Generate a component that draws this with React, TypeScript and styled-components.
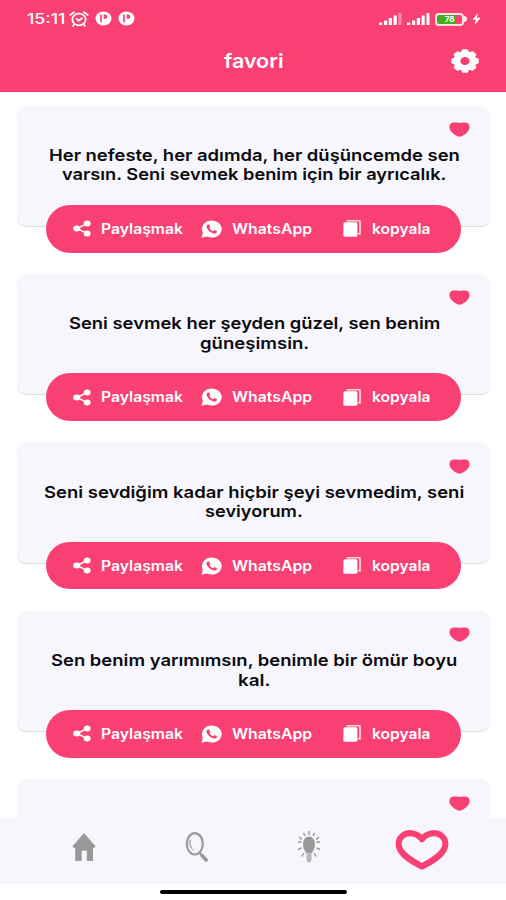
import React, { useLayoutEffect, useRef, useState } from 'react';
import styled, { createGlobalStyle } from 'styled-components';

const PINK = '#f94072';
const PANEL = '#f7f6fc';

const Global = createGlobalStyle`
  * { box-sizing: border-box; }
  body { margin: 0; background: #fff; font-family: Inter, "Liberation Sans", sans-serif; }
  svg { display: block; flex: none; }
`;

const Screen = styled.div`
  width: 506px;
  height: 900px;
  overflow: hidden;
  display: flex;
  flex-direction: column;
  background: #fff;
`;

const Header = styled.header`
  height: 91.5px;
  flex: none;
  background: ${PINK};
  color: #fff;
`;

const StatusBar = styled.div`
  height: 38px;
  padding: 0 25px 0 27px;
  display: flex;
  align-items: center;
  justify-content: space-between;
`;

const StatusGroup = styled.div<{ $gap: number }>`
  display: flex;
  align-items: center;
  gap: ${(p) => p.$gap}px;
`;

const TitleBar = styled.div`
  height: 45px;
  padding: 0 27.5px;
  display: grid;
  grid-template-columns: 1fr auto 1fr;
  align-items: center;
  svg { justify-self: end; }
`;

const List = styled.main`
  flex: none;
  height: 726.5px;
  padding: 14px 16px 0 17px;
  overflow: hidden;
`;

const CardSlot = styled.article`
  height: 168.4px;
`;

const CardBody = styled.div`
  height: 120.5px;
  padding: 16.5px 20px 0 20px;
  border-radius: 9px;
  background: ${PANEL};
  box-shadow: 0 1px 1px rgba(60, 60, 80, 0.18);
`;

const Quote = styled.div`
  padding: 9px 0 0 1px;
  display: flex;
  flex-direction: column;
  align-items: center;
  color: #0b0b0f;
`;

const HeartRow = styled.div`
  display: flex;
  justify-content: flex-end;
`;

const Actions = styled.div`
  height: 47.5px;
  margin: -21px 29px 0;
  padding-left: 26.5px;
  position: relative;
  display: grid;
  grid-template-columns: 128px 142.5px 1fr;
  align-items: center;
  border-radius: 24px;
  background: ${PINK};
  color: #fff;
`;

const Action = styled.div<{ $gap: number }>`
  display: flex;
  align-items: center;
  gap: ${(p) => p.$gap}px;
`;

const NavBar = styled.nav`
  height: 66px;
  flex: none;
  padding: 0 28px 9px;
  display: grid;
  grid-template-columns: repeat(4, 1fr);
  align-items: center;
  justify-items: center;
  background: ${PANEL};
`;

const FavoriteTab = styled.div`
  padding-top: 6px;
`;

const HomeIndicator = styled.div`
  width: 187px;
  height: 4px;
  margin: 6px auto 0;
  flex: none;
  border-radius: 2px;
  background: #000;
`;

const FitBox = styled.span<{ $w: number; $lh: number }>`
  display: block;
  width: ${(p) => p.$w}px;
  height: ${(p) => p.$lh}px;
  line-height: ${(p) => p.$lh}px;
`;

const FitInner = styled.span<{ $size: number; $weight: number }>`
  display: inline-block;
  vertical-align: top;
  white-space: nowrap;
  transform-origin: 0 50%;
  font-size: ${(p) => p.$size}px;
  font-weight: ${(p) => p.$weight};
`;

type FitProps = { width: number; size: number; weight?: number; lh?: number; children: string };

function Wide({ width, size, weight = 600, lh = 19.4, children }: FitProps) {
  const ref = useRef<HTMLSpanElement>(null);
  const [scale, setScale] = useState(1);
  useLayoutEffect(() => {
    if (ref.current) setScale(width / ref.current.offsetWidth);
  }, [width, children]);
  return (
    <FitBox $w={width} $lh={lh}>
      <FitInner ref={ref} $size={size} $weight={weight} style={{ transform: `scaleX(${scale})` }}>
        {children}
      </FitInner>
    </FitBox>
  );
}

const AlarmIcon = () => (
  <svg width="20" height="16" viewBox="0 0 20 16" fill="none" stroke="#fff" strokeWidth="1.7" strokeLinecap="round">
    <ellipse cx="10" cy="8.5" rx="6.7" ry="5.8" />
    <path d="M1.2 4 5 1.2M15 1.2 18.8 4M7.4 7.8 9.8 9.6 13 7.2M5.2 13.5 4 15M14.800 13.500 16 15" />
  </svg>
);

const AppBadgeIcon = () => (
  <svg width="17" height="15" viewBox="0 0 17 15">
    <ellipse cx="8.5" cy="7.5" rx="8" ry="7" fill="#fff" />
    <path d="M6 3.5V11.300" fill="none" stroke={PINK} strokeWidth="1.700" />
    <path d="M8.700 3.400H10.200C13 3.400 13 7.700 10.200 7.700H8.700Z" fill={PINK} />
  </svg>
);

const SignalIcon = ({ full }: { full?: boolean }) => (
  <svg width="23" height="12" viewBox="0 0 23 12" fill="#fff">
    <rect x="0" y="9.5" width="3.200" height="2.5" />
    <rect x="5" y="7.5" width="3.200" height="4.5" />
    <rect x="9.8" y="5" width="3.200" height="7" />
    <rect x="14.5" y="2.5" width="3.200" height="9.5" />
    <rect x="19.5" y="0" width="3" height="12" opacity={full ? 1 : 0.4} />
  </svg>
);

const BatteryShell = styled.div`
  width: 29px;
  height: 13px;
  border: 2px solid #fbe3e6;
  border-radius: 4px;
  display: flex;
  align-items: center;
  justify-content: center;
  font: 700 8px/9px Inter, sans-serif;
  color: #fff;
  background: linear-gradient(90deg, #45ad1d 0 72%, ${PINK} 72%);
`;
const BatteryTip = styled.div`
  width: 3px;
  height: 6px;
  border-radius: 0 3px 3px 0;
  background: #fbe3e6;
`;
const BatteryRow = styled.div`
  display: flex;
  align-items: center;
`;

const BoltIcon = () => (
  <svg width="9" height="12" viewBox="0 0 9 12" fill="#fff">
    <path d="M6 0 .5 6.7H4L2.5 12 8.7 4.8H5Z" />
  </svg>
);

const GearIcon = () => (
  <svg width="28" height="24" viewBox="-14 -14 28 28" preserveAspectRatio="none">
    <circle r="8.200" fill="none" stroke="#fff" strokeWidth="7" />
    {[0, 45, 90, 135, 180, 225, 270, 315].map((a) => (
      <rect key={a} x="-3.4" y="-13.7" width="6.8" height="6" rx="1.8" fill="#fff" transform={`rotate(${a})`} />
    ))}
  </svg>
);

const SmallHeart = () => (
  <svg width="21" height="15" viewBox="0 0 21 15" fill={PINK}>
    <path d="M10.500 1C8.500.4 5 .2 3.200.7 1 1.400.3 3.500.4 5.500.7 9.200 4.500 12.300 7.900 14.100Q10.500 15.400 13.100 14.100C16.500 12.300 20.300 9.200 20.600 5.500 20.700 3.500 20 1.400 17.800.7 16 .2 12.500.4 10.500 1Z" />
  </svg>
);

const ShareIcon = () => (
  <svg width="18" height="17" viewBox="0 0 18 17" fill="#fff">
    <path d="M14.300 3.300 4 8.500 14.300 13.700" fill="none" stroke="#fff" strokeWidth="1.500" />
    <ellipse cx="3.700" cy="8.500" rx="3.500" ry="3" />
    <ellipse cx="14.200" cy="3.500" rx="3.400" ry="3" />
    <ellipse cx="14.200" cy="13.500" rx="3.400" ry="3" />
  </svg>
);

const WhatsAppIcon = () => (
  <svg width="21" height="18" viewBox="0 0 21 18">
    <path d="M.4 17.700 1.900 13.100C-1 7.400 3.200.4 10.700.4 16.300.4 20.700 4.100 20.700 8.900 20.700 15.600 12.700 19.400 6.200 16.500Z" fill="#fff" />
    <path d="M6.700 4.500C5.400 5.200 5.200 6.800 5.900 8.100 7.300 10.900 9.700 12.900 12.900 13.600 14.500 13.900 16 12.800 16.100 11.300L13.300 10 12.100 11.300C10.400 10.700 9.200 9.600 8.500 8.200L9.400 7.100 8.300 4.500Z" fill={PINK} />
  </svg>
);

const CopyIcon = () => (
  <svg width="18" height="17" viewBox="0 0 18 17">
    <path d="M4 1.500Q4 .7 5 .7H16Q17 .7 17 1.600V13.700H15" fill="none" stroke="#ffdfe8" strokeWidth="1.600" />
    <rect x=".4" y="2.300" width="14" height="14.500" rx="1.600" fill="#fff" />
  </svg>
);

const HomeIcon = () => (
  <svg width="24" height="30" viewBox="0 0 24 30" fill="#999">
    <path d="M12 1 23.500 14.300 22.300 16 21 15.500V29H14.800V18.800H9.700V29H3.200V15.500L1.700 16 .5 14.300Z" />
  </svg>
);

const SearchIcon = () => (
  <svg width="24" height="32" viewBox="0 0 24 32" fill="none" stroke="#999" strokeLinecap="round">
    <ellipse cx="9.800" cy="12.800" rx="8" ry="10.700" strokeWidth="2.200" />
    <path d="M5.400 9Q3.900 13.200 6.600 17.200M8 18.300 8.200 18.500" strokeWidth="1.200" />
    <path d="M14.800 21.800 16 23.300" strokeWidth="2" />
    <path d="M17 24.500 21.200 29" strokeWidth="3.600" />
  </svg>
);

const BulbIcon = () => (
  <svg width="24" height="34" viewBox="0 0 24 34">
    <g stroke="#999" strokeWidth="1.400">
      <path d="M12 1V5M6.500 2.800 8 6M17.500 2.800 16 6M2 7 5 9.500M22 7 19 9.500M1 12H4.500M23 12H19.500M1 19.500 4.500 18M23 19.500 19.500 18M4.800 26.500 7 23M19.200 26.500 17 23" />
    </g>
    <path d="M12 6.500C8 6.500 6 10.500 6 14.500 6 18.500 8 21 9.300 23.500H14.700C16 21 18 18.500 18 14.500 18 10.500 16 6.500 12 6.500Z" fill="#999" />
    <path d="M9.500 24H14.500V30L12.800 32.500H11.200L9.500 30Z" fill="#b7b7ba" />
  </svg>
);

const BigHeartIcon = () => (
  <svg width="54" height="40" viewBox="0 0 54 40" fill="none" stroke={PINK} strokeWidth="6.200" strokeLinejoin="round">
    <path d="M27 9.200C22 2.500 13.500 2 8.600 5 2.700 9 2.700 15.500 5.600 20.500 10 27.500 18 31.500 27 36.500 36 31.500 44 27.500 48.400 20.500 51.300 15.500 51.300 9 45.400 5 40.500 2 32 2.500 27 9.200Z" />
  </svg>
);

type Line = [string, number];
const quotes: Line[][] = [
  [['Her nefeste, her adımda, her düşüncemde sen', 411], ['varsın. Seni sevmek benim için bir ayrıcalık.', 384]],
  [['Seni sevmek her şeyden güzel, sen benim', 371], ['güneşimsin.', 109]],
  [['Seni sevdiğim kadar hiçbir şeyi sevmedim, seni', 420], ['seviyorum.', 98]],
  [['Sen benim yarımımsın, benimle bir ömür boyu', 406], ['kal.', 32]],
  [],
];

function QuoteCard({ lines }: { lines: Line[] }) {
  return (
    <CardSlot>
      <CardBody>
        <HeartRow><SmallHeart /></HeartRow>
        <Quote>
          {lines.map(([text, w]) => <Wide key={text} width={w} size={16.5}>{text}</Wide>)}
        </Quote>
      </CardBody>
      {lines.length > 0 && (
        <Actions>
          <Action $gap={10.5}><ShareIcon /><Wide width={82} size={14}>Paylaşmak</Wide></Action>
          <Action $gap={10}><WhatsAppIcon /><Wide width={80} size={14}>WhatsApp</Wide></Action>
          <Action $gap={11}><CopyIcon /><Wide width={59} size={14}>kopyala</Wide></Action>
        </Actions>
      )}
    </CardSlot>
  );
}

export default function App() {
  return (
    <Screen>
      <Global />
      <Header>
        <StatusBar>
          <StatusGroup $gap={6}>
            <StatusGroup $gap={4}>
              <Wide width={38} size={14} weight={500}>15:11</Wide>
              <AlarmIcon />
            </StatusGroup>
            <AppBadgeIcon />
            <AppBadgeIcon />
          </StatusGroup>
          <StatusGroup $gap={5}>
            <SignalIcon />
            <SignalIcon full />
            <BatteryRow><BatteryShell>78</BatteryShell><BatteryTip /></BatteryRow>
            <BoltIcon />
          </StatusGroup>
        </StatusBar>
        <TitleBar>
          <span />
          <Wide width={59} size={20} lh={24}>favori</Wide>
          <GearIcon />
        </TitleBar>
      </Header>
      <List>
        {quotes.map((lines, i) => <QuoteCard key={i} lines={lines} />)}
      </List>
      <NavBar>
        <HomeIcon />
        <SearchIcon />
        <BulbIcon />
        <FavoriteTab><BigHeartIcon /></FavoriteTab>
      </NavBar>
      <HomeIndicator />
    </Screen>
  );
}
